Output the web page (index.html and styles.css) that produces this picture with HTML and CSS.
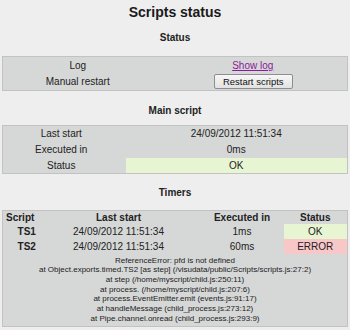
FILE: index.html
```html
<!DOCTYPE html>
<html lang="en">

<head>
  <meta charset="UTF-8" />
  <meta name="viewport" content="width=device-width, initial-scale=1.0" />
  <title>Scripts status</title>
  <link rel="stylesheet" href="styles.css">
</head>

<body>
  <div class="page">
    <h1 class="title">Scripts status</h1>

    <!-- status -->
    <h2 class="section section-status">Status</h2>
    <table class="grid statusTable">
      <tr>
        <td class="colLabel">Log</td>
        <td><a href="#" class="logLink">Show log</a></td>
      </tr>
      <tr>
        <td class="colLabel">Manual restart</td>
        <td><button type="button" class="btn">Restart scripts</button></td>
      </tr>
    </table>

    <!-- main script -->
    <h2 class="section section-main">Main script</h2>
    <table class="grid mainTable">
      <tr>
        <td class="colLabel">Last start</td>
        <td>24/09/2012 11:51:34</td>
      </tr>
      <tr>
        <td class="colLabel">Executed in</td>
        <td>0ms</td>
      </tr>
      <tr>
        <td class="colLabel">Status</td>
        <td class="ok">OK</td>
      </tr>
    </table>

    <!-- timers -->
    <h2 class="section section-timers">Timers</h2>
    <table class="grid timerTable">
      <tr class="head">
        <th class="colScript">Script</th>
        <th class="colStart">Last start</th>
        <th class="colExec">Executed in</th>
        <th class="colStatus">Status</th>
      </tr>
      <tr class="row">
        <td class="name">TS1</td>
        <td class="colStart">24/09/2012 11:51:34</td>
        <td>1ms</td>
        <td class="ok">OK</td>
      </tr>
      <tr class="row">
        <td class="name">TS2</td>
        <td class="colStart">24/09/2012 11:51:34</td>
        <td>60ms</td>
        <td class="error">ERROR</td>
      </tr>
      <tr>
        <td colspan="4" class="trace">
          ReferenceError: pfd is not defined<br>
          at Object.exports.timed.TS2 [as step] (/visudata/public/Scripts/scripts.js:27:2)<br>
          at step (/home/myscript/child.js:250:11)<br>
          at process. (/home/myscript/child.js:207:6)<br>
          at process.EventEmitter.emit (events.js:91:17)<br>
          at handleMessage (child_process.js:273:12)<br>
          at Pipe.channel.onread (child_process.js:293:9)
        </td>
      </tr>
    </table>
  </div>
</body>

</html>
```

FILE: styles.css
```css
* {
  margin: 0;
  padding: 0;
  box-sizing: border-box;
}

body {
  background-color: #eeeeee;
  font-family: "Liberation Sans", Arial, sans-serif;
  font-size: 10px;
  color: #222;
}

.page {
  padding: 0 2px;
}

.title {
  font-size: 14px;
  line-height: 18px;
  text-align: center;
  margin-top: 3px;
  color: #1a1a1a;
}

.section {
  font-size: 10px;
  line-height: 14px;
  text-align: center;
}

.section-status {
  margin: 10px 0 11px;
}

.section-main {
  margin: 13px 0 7px;
}

.section-timers {
  margin: 12px 0 10px;
}

/* tables */
.grid {
  width: 100%;
  border-collapse: collapse;
  background-color: #d6d7d7;
  border: 1px solid #c2c2c2;
}

.grid td,
.grid th {
  padding: 0;
  text-align: center;
  vertical-align: middle;
}

.statusTable td {
  height: 17px;
}

.statusTable .colLabel {
  width: 150px;
}

.logLink {
  color: #8a1a9a;
  display: inline-block;
  margin-left: 6px;
}

.btn {
  font-family: "Liberation Sans", Arial, sans-serif;
  font-size: 9.5px;
  height: 15px;
  padding: 0 8px;
  margin-left: 7px;
  color: #111;
  border: 1px solid #8e8e8e;
  border-radius: 2px;
  background: linear-gradient(#f7f7f7, #e2e2e2);
  vertical-align: middle;
}

.mainTable td {
  height: 16px;
}

.mainTable .colLabel {
  width: 123px;
  padding-right: 6px;
}

.ok {
  background-color: #e8f5d3;
}

.error {
  background-color: #f8c8c9;
}

.timerTable .head th {
  height: 13px;
  font-size: 10px;
}

.timerTable .row td {
  height: 15px;
}

.timerTable .colScript {
  width: 48px;
  text-align: left;
  padding-left: 3px;
}

.timerTable .name {
  font-weight: bold;
  font-size: 10px;
}

.timerTable .colStart {
  width: 150px;
  padding-right: 14px;
}

.timerTable .colExec {
  width: 83px;
}

.trace {
  font-size: 8px;
  line-height: 9.7px;
  padding: 2px 0 3px !important;
}
```
